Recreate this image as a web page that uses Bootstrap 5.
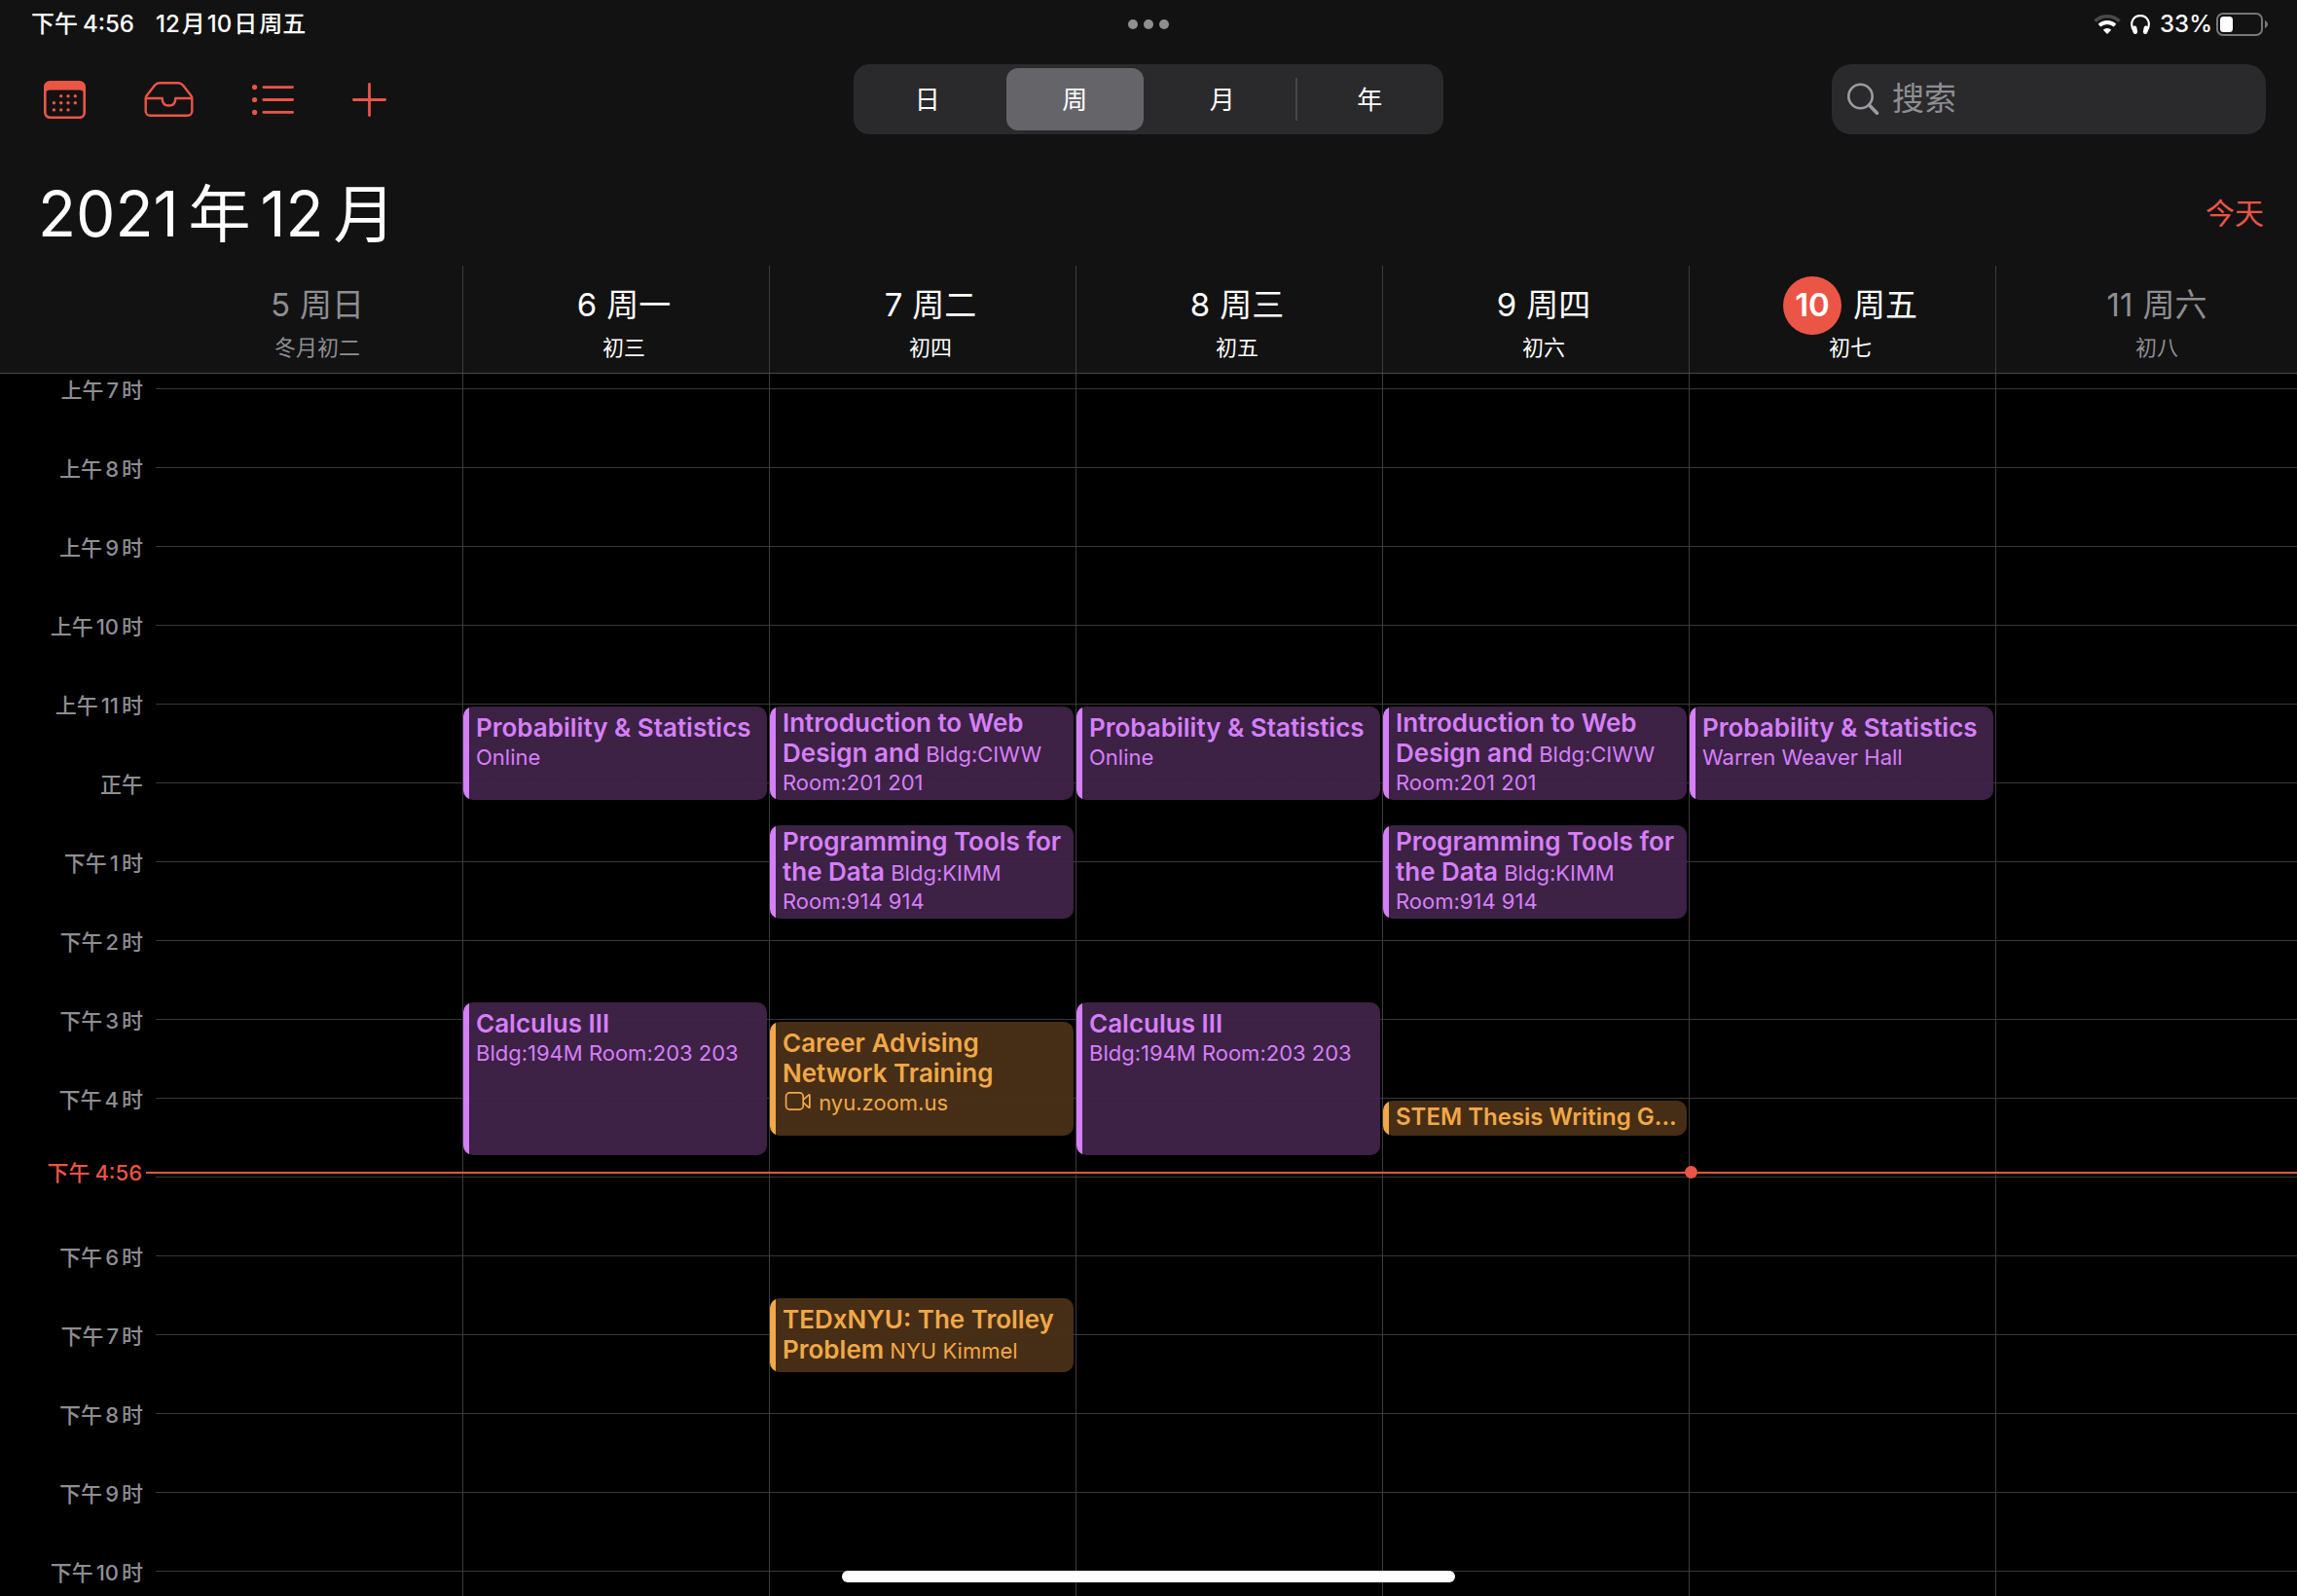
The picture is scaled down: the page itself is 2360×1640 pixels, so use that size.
<!DOCTYPE html>
<html lang="zh-CN" data-bs-theme="dark">
<head>
<meta charset="utf-8">
<meta name="viewport" content="width=device-width, initial-scale=1">
<title>日历</title>
<link href="https://cdn.jsdelivr.net/npm/bootstrap@5.3.0/dist/css/bootstrap.min.css" rel="stylesheet">
<style>
:root { --accent:#eb5545; --panel:#121212; --field:#2a2a2c; --muted:#8e8e93; --rule:#3c3c3e; --hour:81px; --gutter:160px; }
body { background:#000; color:#fff; font-family:Inter,"Noto Sans CJK SC",sans-serif; }
button, input { font-family:inherit; }
.top-panel { background:var(--panel); border-bottom:1px solid #48484a; }
.status-bar { height:48px; padding:1px 30px 0; font-size:24px; line-height:32px; font-weight:500; }
.status-time { margin-left:2px; }
.status-date { margin-left:22px; }
.status-icons { gap:10px; }
.num-gap { margin-left:5px; }
.num-wrap { margin:0 3px; }
.hair { margin:0 2px; }
.status-dots { gap:6px; }
.status-dots i { width:10px; height:10px; border-radius:50%; background:#8f8f8f; }
.toolbar { height:72px; margin-top:18px; padding:0 32px; }
.tool-btns { gap:60px; }
.tool-btn { color:var(--accent); border:0; background:none; padding:0; line-height:0; }
.tool-btn:first-child { margin-left:13px; }
.side { flex:1 1 0; }
.segments { width:606px; height:72px; padding:4px 0; border-radius:16px; background:var(--field); }
.segments .seg { flex:1 1 0; display:flex; align-items:center; justify-content:center; border-radius:12px; font-size:26px; margin:0 5px; cursor:pointer; }
.segments .btn-check:checked + .seg { background:#656469; }
.seg-rule { width:2px; height:44px; background:#464649; margin:0 -1px; align-self:center; }
.search-field { width:446px; height:72px; border-radius:20px; background:var(--field); padding:0 14px; color:var(--muted); }
.search-field input { border:0; background:none; outline:0; color:#fff; font-size:33px; min-width:0; padding:0 0 0 12px; }
.search-field input::placeholder { color:var(--muted); opacity:1; }
.title-row { height:135px; padding:28px 34px 0 39px; }
.month-title { font-size:64px; line-height:80px; font-weight:400; }
.month-title .yr { margin:0 10px; }
.month-title .mo { margin-left:10px; }
.today-link { color:var(--accent); font-size:30px; text-decoration:none; }
.week-head, .week-cols { padding-left:var(--gutter); }
.day-head { flex:1 0 315px; height:110px; padding:11px 0 0 16px; border-left:1px solid var(--rule); }
.day-head:first-child, .day-col:first-child { border-left-color:transparent; }
.day-name { height:60px; font-size:33px; line-height:58px; gap:10px; }
.lunar { font-size:22px; line-height:26px; }
.off { color:var(--muted); }
.today-dot { width:60px; height:60px; border-radius:50%; background:var(--accent); font-weight:600; text-align:center; margin-right:2px; }
.week-body { padding-top:15px; }
.hour-row { height:var(--hour); }
.hour-row .hour { width:var(--gutter); padding-right:13px; font-size:22px; line-height:36px; margin-top:-16px; color:var(--muted); font-weight:500; text-align:right; }
.hour-row .rule { flex:1 1 0; border-top:1px solid #38383a; }
.day-col { flex:1 0 315px; border-left:1px solid var(--rule); }
/* Events sit at their start time, in hours after 7 am. */
.event-box { top:calc(18px + var(--from) * var(--hour)); height:calc(var(--len) * var(--hour) - 5px); left:0; right:2px; border-radius:10px; padding:7px 4px 0 13px; overflow:hidden; text-decoration:none; white-space:nowrap; line-height:29px; font-size:22px; color:var(--ink); background:linear-gradient(to right, var(--bar) 6px, var(--fill) 6px); }
.event-box b { font-size:26px; line-height:30px; font-weight:600; }
.event-box.snug { padding-top:2px; }
.event-box.slim b { font-size:24px; }
.purple { --ink:#d67ffa; --bar:#d67ffa; --fill:rgba(63,35,71,.96); }
.orange { --ink:#f0a848; --bar:#f0a848; --fill:rgba(73,47,22,.97); }
.now-row { top:calc(15px + 9.94 * var(--hour)); left:0; right:0; height:2px; color:var(--accent); font-size:22px; line-height:36px; font-weight:500; }
.now-label { width:150px; padding-right:4px; text-align:right; }
.now-line { flex:1 1 0; height:2px; background:var(--accent); }
.now-dot { width:13px; height:13px; border-radius:50%; background:var(--accent); left:calc(var(--gutter) + 1571px); top:-6px; }
.home-bar { width:630px; height:12px; border-radius:6px; bottom:14px; }
</style>
<script src="https://cdn.jsdelivr.net/npm/bootstrap@5.3.0/dist/js/bootstrap.bundle.min.js"></script>
</head>
<body>
<div class="vh-100 d-flex flex-column overflow-hidden position-relative">
<header class="top-panel flex-shrink-0 overflow-hidden">
  <div class="status-bar d-flex align-items-center">
    <div class="side d-flex"><span class="status-time">下午<span class="num-gap">4:56</span></span><span class="status-date">12<span class="hair">月</span>10<span class="hair">日</span>周五</span></div>
    <div class="status-dots d-flex"><i></i><i></i><i></i></div>
    <div class="status-icons side d-flex align-items-center justify-content-end">
      <svg width="28" height="20" viewBox="0 0 28 20" fill="none"><path d="M1.500 6.800a18 18 0 0 1 25 0" stroke="#48484a" stroke-width="3.600"/><path d="M6 11.200a11.600 11.600 0 0 1 16 0" stroke="#fff" stroke-width="3.800"/><path d="M14 20l-4.200-4.300a6 6 0 0 1 8.400 0z" fill="#fff"/></svg>
      <svg width="20" height="20" viewBox="0 0 20 20" fill="none"><path d="M3.400 17C-1.800 8.400 3 1.100 10 1.100S21.800 8.400 16.600 17" stroke="#fff" stroke-width="2.100"/><rect x="2.200" y="11.500" width="4.600" height="8.500" rx="2.300" fill="#fff" transform="rotate(-10 4.500 16)"/><rect x="13.200" y="11.500" width="4.600" height="8.500" rx="2.300" fill="#fff" transform="rotate(10 15.500 16)"/></svg>
      <span class="d-flex align-items-center gap-1">33%
      <svg width="53" height="24" viewBox="0 0 53 24" fill="none"><rect x="1" y="1" width="46" height="22" rx="6" stroke="#77777a" stroke-width="2"/><rect x="4" y="4" width="13" height="16" rx="3.500" fill="#fff"/><path d="M50 8c4 2 4 6 0 8z" fill="#77777a"/></svg></span>
    </div>
  </div>
  <nav class="toolbar d-flex align-items-center">
    <div class="tool-btns side d-flex align-items-center">
      <button class="tool-btn" aria-label="日历"><svg width="43" height="39" viewBox="0 0 43 39"><rect x="1.300" y="1.300" width="40.400" height="36.400" rx="5" fill="none" stroke="currentColor" stroke-width="2.600"/><path d="M1 11V6a5 5 0 0 1 5-5h31a5 5 0 0 1 5 5v5h-2q0-1.500-3-1.500H6q-3 0-3 1.500z" fill="currentColor"/><g fill="currentColor"><circle cx="17.700" cy="15.700" r="1.700"/><circle cx="25" cy="15.700" r="1.700"/><circle cx="32.300" cy="15.700" r="1.700"/><circle cx="10.400" cy="22.800" r="1.700"/><circle cx="17.700" cy="22.800" r="1.700"/><circle cx="25" cy="22.800" r="1.700"/><circle cx="32.300" cy="22.800" r="1.700"/><circle cx="10.400" cy="29.900" r="1.700"/><circle cx="17.700" cy="29.900" r="1.700"/><circle cx="25" cy="29.900" r="1.700"/></g></svg></button>
      <button class="tool-btn" aria-label="收件箱"><svg width="51" height="36" viewBox="0 0 50 36" fill="none" stroke="currentColor" stroke-width="2.400" stroke-linejoin="round"><path d="M1.200 17v13.300a4.500 4.500 0 0 0 4.500 4.500h38.600a4.500 4.500 0 0 0 4.500-4.500V17q0-1.600-1.200-3L39.400 3.600q-2-2.400-4.600-2.400H15.200q-2.600 0-4.600 2.400L2.400 14q-1.200 1.400-1.200 3h17q0 7.500 6.800 7.500t6.800-7.500h17"/></svg></button>
      <button class="tool-btn" aria-label="列表"><svg width="43" height="31" viewBox="0 0 43 31" fill="currentColor"><circle cx="2.600" cy="2.600" r="2.600"/><circle cx="2.600" cy="15.500" r="2.600"/><circle cx="2.600" cy="28.400" r="2.600"/><path d="M11.800 2.600h29.800M11.800 15.500h29.800M11.800 28.400h29.800" stroke="currentColor" stroke-width="2.800" stroke-linecap="round"/></svg></button>
      <button class="tool-btn" aria-label="新建日程"><svg width="35" height="35" viewBox="0 0 35 35" stroke="currentColor" stroke-width="2.800" stroke-linecap="round"><path d="M17.500 1.400v32.200M1.400 17.500h32.200"/></svg></button>
    </div>
    <div class="segments d-flex" role="group" aria-label="视图">
      <input class="btn-check" type="radio" name="view" id="v-day"><label class="seg" for="v-day">日</label>
      <input class="btn-check" type="radio" name="view" id="v-week" checked><label class="seg" for="v-week">周</label>
      <input class="btn-check" type="radio" name="view" id="v-month"><label class="seg" for="v-month">月</label>
      <span class="seg-rule"></span>
      <input class="btn-check" type="radio" name="view" id="v-year"><label class="seg" for="v-year">年</label>
    </div>
    <div class="side d-flex justify-content-end">
      <label class="search-field d-flex align-items-center">
        <svg class="flex-shrink-0" width="36" height="36" viewBox="0 0 36 36" fill="none" stroke="#9c9ba1" stroke-linecap="round"><circle cx="15.500" cy="15" r="12.200" stroke-width="2.600"/><path d="M24.500 24l8 8.200" stroke-width="3.600"/></svg>
        <input class="flex-grow-1" type="search" placeholder="搜索" aria-label="搜索">
      </label>
    </div>
  </nav>
  <div class="title-row d-flex align-items-center justify-content-between">
    <h1 class="month-title m-0">2021<span class="yr">年</span>12<span class="mo">月</span></h1>
    <a class="today-link" href="#today">今天</a>
  </div>
  <div class="week-head d-flex text-center">
    <div class="day-head off"><div class="day-name d-flex justify-content-center"><span>5</span><span>周日</span></div><div class="lunar">冬月初二</div></div>
    <div class="day-head"><div class="day-name d-flex justify-content-center"><span>6</span><span>周一</span></div><div class="lunar">初三</div></div>
    <div class="day-head"><div class="day-name d-flex justify-content-center"><span>7</span><span>周二</span></div><div class="lunar">初四</div></div>
    <div class="day-head"><div class="day-name d-flex justify-content-center"><span>8</span><span>周三</span></div><div class="lunar">初五</div></div>
    <div class="day-head"><div class="day-name d-flex justify-content-center"><span>9</span><span>周四</span></div><div class="lunar">初六</div></div>
    <div class="day-head" id="today"><div class="day-name d-flex justify-content-center"><span class="today-dot">10</span><span>周五</span></div><div class="lunar">初七</div></div>
    <div class="day-head off"><div class="day-name d-flex justify-content-center"><span>11</span><span>周六</span></div><div class="lunar">初八</div></div>
  </div>
</header>
<main class="week-body position-relative flex-grow-1 overflow-hidden">
  <div class="hour-row d-flex"><div class="hour">上午<span class="num-wrap">7</span>时</div><div class="rule"></div></div>
  <div class="hour-row d-flex"><div class="hour">上午<span class="num-wrap">8</span>时</div><div class="rule"></div></div>
  <div class="hour-row d-flex"><div class="hour">上午<span class="num-wrap">9</span>时</div><div class="rule"></div></div>
  <div class="hour-row d-flex"><div class="hour">上午<span class="num-wrap">10</span>时</div><div class="rule"></div></div>
  <div class="hour-row d-flex"><div class="hour">上午<span class="num-wrap">11</span>时</div><div class="rule"></div></div>
  <div class="hour-row d-flex"><div class="hour">正午</div><div class="rule"></div></div>
  <div class="hour-row d-flex"><div class="hour">下午<span class="num-wrap">1</span>时</div><div class="rule"></div></div>
  <div class="hour-row d-flex"><div class="hour">下午<span class="num-wrap">2</span>时</div><div class="rule"></div></div>
  <div class="hour-row d-flex"><div class="hour">下午<span class="num-wrap">3</span>时</div><div class="rule"></div></div>
  <div class="hour-row d-flex"><div class="hour">下午<span class="num-wrap">4</span>时</div><div class="rule"></div></div>
  <div class="hour-row d-flex"><div class="hour"></div><div class="rule"></div></div>
  <div class="hour-row d-flex"><div class="hour">下午<span class="num-wrap">6</span>时</div><div class="rule"></div></div>
  <div class="hour-row d-flex"><div class="hour">下午<span class="num-wrap">7</span>时</div><div class="rule"></div></div>
  <div class="hour-row d-flex"><div class="hour">下午<span class="num-wrap">8</span>时</div><div class="rule"></div></div>
  <div class="hour-row d-flex"><div class="hour">下午<span class="num-wrap">9</span>时</div><div class="rule"></div></div>
  <div class="hour-row d-flex"><div class="hour">下午<span class="num-wrap">10</span>时</div><div class="rule"></div></div>

  <div class="week-cols position-absolute top-0 bottom-0 start-0 end-0 d-flex">
    <div class="day-col"></div>
    <div class="day-col position-relative">
      <a href="#event" class="event-box purple position-absolute" style="--from:4;--len:1.25"><b>Probability &amp; Statistics</b><br>Online</a>
      <a href="#event" class="event-box purple position-absolute" style="--from:7.75;--len:2"><b>Calculus III</b><br>Bldg:194M Room:203 203</a>
    </div>
    <div class="day-col position-relative">
      <a href="#event" class="event-box snug purple position-absolute" style="--from:4;--len:1.25"><b>Introduction to Web<br>Design and</b> Bldg:CIWW<br>Room:201 201</a>
      <a href="#event" class="event-box snug purple position-absolute" style="--from:5.5;--len:1.25"><b>Programming Tools for<br>the Data</b> Bldg:KIMM<br>Room:914 914</a>
      <a href="#event" class="event-box orange position-absolute" style="--from:8;--len:1.5"><b>Career Advising<br>Network Training</b><br><svg width="31" height="20" viewBox="0 0 31 21" fill="none" stroke="currentColor" stroke-width="1.800" stroke-linejoin="round" class="align-text-bottom mb-1"><rect x="3" y="1" width="18.500" height="18" rx="4"/><path d="M21.500 8.500l6-5.300q1-.6 1 .6v12.400q0 1.200-1 .6l-6-5.300"/></svg> nyu.zoom.us</a>
      <a href="#event" class="event-box orange position-absolute" style="--from:11.5;--len:1"><b>TEDxNYU: The Trolley<br>Problem</b> NYU Kimmel</a>
    </div>
    <div class="day-col position-relative">
      <a href="#event" class="event-box purple position-absolute" style="--from:4;--len:1.25"><b>Probability &amp; Statistics</b><br>Online</a>
      <a href="#event" class="event-box purple position-absolute" style="--from:7.75;--len:2"><b>Calculus III</b><br>Bldg:194M Room:203 203</a>
    </div>
    <div class="day-col position-relative">
      <a href="#event" class="event-box snug purple position-absolute" style="--from:4;--len:1.25"><b>Introduction to Web<br>Design and</b> Bldg:CIWW<br>Room:201 201</a>
      <a href="#event" class="event-box snug purple position-absolute" style="--from:5.5;--len:1.25"><b>Programming Tools for<br>the Data</b> Bldg:KIMM<br>Room:914 914</a>
      <a href="#event" class="event-box snug slim orange position-absolute" style="--from:9;--len:.5"><b>STEM Thesis Writing G...</b></a>
    </div>
    <div class="day-col position-relative">
      <a href="#event" class="event-box purple position-absolute" style="--from:4;--len:1.25"><b>Probability &amp; Statistics</b><br>Warren Weaver Hall</a>
    </div>
    <div class="day-col"></div>
  </div>
  <div class="now-row position-absolute d-flex align-items-center">
    <div class="now-label">下午<span class="num-gap">4:56</span></div>
    <div class="now-line"></div>
    <span class="now-dot position-absolute"></span>
  </div>
</main>
<div class="home-bar bg-white position-absolute start-50 translate-middle-x"></div>
</div>
</body>
</html>
